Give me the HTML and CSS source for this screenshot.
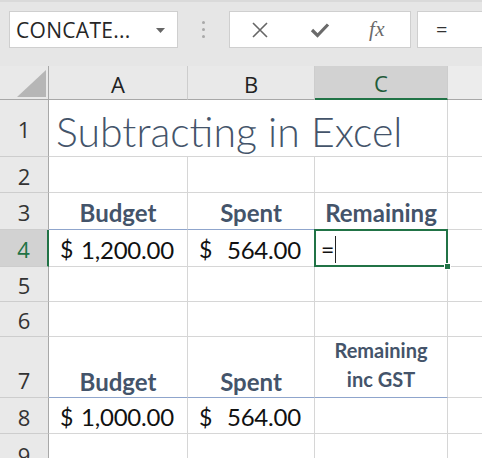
FILE: index.html
```html
<!DOCTYPE html>
<html>
<head>
<meta charset="utf-8">
<link rel="stylesheet" href="styles.css">
</head>
<body>
<div class="toolbar">
  <div class="namebox">
    <span class="name">CONCATE...</span>
    <svg class="dd" width="9" height="5" viewBox="0 0 9 5"><polygon points="0,0 9,0 4.5,5" fill="#666"/></svg>
  </div>
  <div class="grip"><span></span><span></span><span></span></div>
  <div class="fbuttons">
    <svg class="ico" width="18" height="18" viewBox="0 0 18 18"><path d="M2 2 L16 16 M16 2 L2 16" stroke="#666" stroke-width="1.6" fill="none"/></svg>
    <svg class="ico" width="20" height="18" viewBox="0 0 20 18"><path d="M2 9 L7.5 14.5 L18 3.5" stroke="#6a6a6a" stroke-width="3.2" fill="none" stroke-linejoin="miter"/></svg>
    <span class="fx">fx</span>
  </div>
  <div class="finput">=</div>
</div>
<div class="sheet">
  <div class="corner"><svg width="49" height="34" viewBox="0 0 49 34"><polygon points="17,31 46,31 46,4" fill="#b6b6b6"/></svg></div>
  <div class="ch">A</div>
  <div class="ch">B</div>
  <div class="ch sel">C</div>
  <div class="ch last"></div>

  <div class="rh">1</div>
  <div class="c title">Subtracting in Excel</div>
  <div class="c last"></div>

  <div class="rh">2</div>
  <div class="c"></div><div class="c"></div><div class="c"></div><div class="c last"></div>

  <div class="rh">3</div>
  <div class="c hd hb">Budget</div><div class="c hd hb">Spent</div><div class="c hd">Remaining</div><div class="c last"></div>

  <div class="rh sel">4</div>
  <div class="c acc"><span class="cur">$</span><span>1,200.00</span></div>
  <div class="c acc"><span class="cur">$</span><span>564.00</span></div>
  <div class="c active"><span class="eq">=</span><span class="caret"></span><span class="handle"></span></div>
  <div class="c last"></div>

  <div class="rh">5</div>
  <div class="c"></div><div class="c"></div><div class="c"></div><div class="c last"></div>

  <div class="rh">6</div>
  <div class="c"></div><div class="c"></div><div class="c"></div><div class="c last"></div>

  <div class="rh bottom">7</div>
  <div class="c hd hb bottom">Budget</div><div class="c hd hb bottom">Spent</div><div class="c hd hb wrap">Remaining<br>inc GST</div><div class="c last"></div>

  <div class="rh">8</div>
  <div class="c acc"><span class="cur">$</span><span>1,000.00</span></div>
  <div class="c acc"><span class="cur">$</span><span>564.00</span></div>
  <div class="c"></div><div class="c last"></div>

  <div class="rh">9</div>
  <div class="c"></div><div class="c"></div><div class="c"></div><div class="c last"></div>
</div>
</body>
</html>
```
FILE: styles.css
```css
html, body {
  margin: 0;
  padding: 0;
  background: #ffffff;
  overflow: hidden;
  font-family: Lato, "Open Sans", sans-serif;
}
.toolbar {
  height: 66px;
  box-sizing: border-box;
  background: #e6e6e6;
  border-top: 2px solid #dadada;
  display: flex;
  align-items: flex-start;
  padding: 9px 0 0 9px;
}
.namebox {
  width: 169px;
  height: 37px;
  box-sizing: border-box;
  background: #fff;
  border: 1px solid #cfcfcf;
  display: flex;
  align-items: center;
  justify-content: space-between;
  padding: 0 12px 0 6px;
}
.name {
  font-family: "Open Sans", sans-serif;
  font-size: 21px;
  color: #262626;
  letter-spacing: 0.3px;
}
.dd { margin-top: 1px; }
.grip {
  width: 51px;
  height: 37px;
  display: flex;
  flex-direction: column;
  align-items: center;
  justify-content: center;
  gap: 4px;
}
.grip span {
  width: 3px;
  height: 3px;
  border-radius: 50%;
  background: #a9a9a9;
}
.fbuttons {
  width: 182px;
  height: 37px;
  box-sizing: border-box;
  background: #fff;
  border: 1px solid #cfcfcf;
  display: flex;
  align-items: center;
  padding-left: 21px;
}
.fbuttons .ico:nth-child(1) { margin-right: 41px; }
.fbuttons .ico:nth-child(2) { margin-right: 39px; }
.fx {
  font-family: "Liberation Serif", serif;
  font-style: italic;
  font-size: 21px;
  color: #6a6a6a;
  letter-spacing: 0.5px;
}
.finput {
  margin-left: 6px;
  flex: 1;
  height: 37px;
  box-sizing: border-box;
  background: #fff;
  border: 1px solid #cfcfcf;
  border-right: none;
  font-family: "Open Sans", sans-serif;
  font-size: 20px;
  color: #333;
  padding-left: 18px;
  line-height: 35px;
}
.sheet {
  display: grid;
  grid-template-columns: 49px 139px 127px 133px 34px;
  grid-template-rows: 34px 57px 36px 37px 37px 35px 35px 61px 36px 40px;
}
.sheet > div { box-sizing: border-box; }
.corner {
  background: #e9e9e9;
  border-right: 1px solid #a8a8a8;
  border-bottom: 1px solid #a8a8a8;
}
.corner svg { display: block; }
.ch {
  background: #e9e9e9;
  border-right: 1px solid #cdcdcd;
  border-bottom: 1px solid #a8a8a8;
  display: flex;
  align-items: center;
  justify-content: center;
  font-family: "Open Sans", sans-serif;
  font-size: 22px;
  color: #222;
  padding-top: 2px;
}
.ch.sel {
  background: #d2d2d2;
  border-bottom: 2px solid #217346;
  color: #1f5c3a;
}
.ch.last { background: #ececec; border-right: none; }
.rh {
  background: #e9e9e9;
  border-right: 1px solid #a8a8a8;
  border-bottom: 1px solid #cdcdcd;
  display: flex;
  align-items: center;
  justify-content: center;
  font-family: "Open Sans", sans-serif;
  font-size: 22px;
  color: #333;
  padding-top: 2px;
}
.rh.sel {
  background: #d2d2d2;
  border-right: 2px solid #217346;
  color: #217346;
}
.rh.bottom { align-items: flex-end; padding-bottom: 2px; }
.c {
  border-right: 1px solid #d6d6d6;
  border-bottom: 1px solid #d6d6d6;
  display: flex;
  align-items: center;
  position: relative;
}
.c.last { border-right: none; }
.title {
  grid-column: span 3;
  font-size: 41px;
  font-weight: 300;
  color: #44546a;
  padding-left: 7px;
  padding-top: 6px;
  white-space: nowrap;
}
.hd {
  justify-content: center;
  font-weight: 700;
  font-size: 24px;
  color: #44546a;
  padding-top: 3px;
  white-space: nowrap;
}
.hb { border-bottom: 1px solid #8fa5cc; }
.hd.bottom { align-items: flex-end; padding-bottom: 1px; }
.wrap {
  font-size: 20px;
  line-height: 29px;
  text-align: center;
  align-items: flex-end;
  padding-bottom: 3px;
}
.acc {
  justify-content: space-between;
  font-size: 24px;
  color: #111;
  padding: 2px 13px 0 11px;
  letter-spacing: -0.2px;
}
.cur { font-size: 23px; }
.active {
  font-size: 23px;
  color: #111;
  padding-left: 6px;
  padding-top: 2px;
}
.active::after {
  content: "";
  position: absolute;
  left: -1px;
  top: -1px;
  right: -1px;
  bottom: -1px;
  border: 2px solid #217346;
  pointer-events: none;
}
.caret {
  width: 1px;
  height: 27px;
  background: #222;
  margin-left: 1px;
}
.handle {
  position: absolute;
  right: -4px;
  bottom: -4px;
  width: 5px;
  height: 5px;
  background: #217346;
  border: 1px solid #fff;
  z-index: 2;
}
```
